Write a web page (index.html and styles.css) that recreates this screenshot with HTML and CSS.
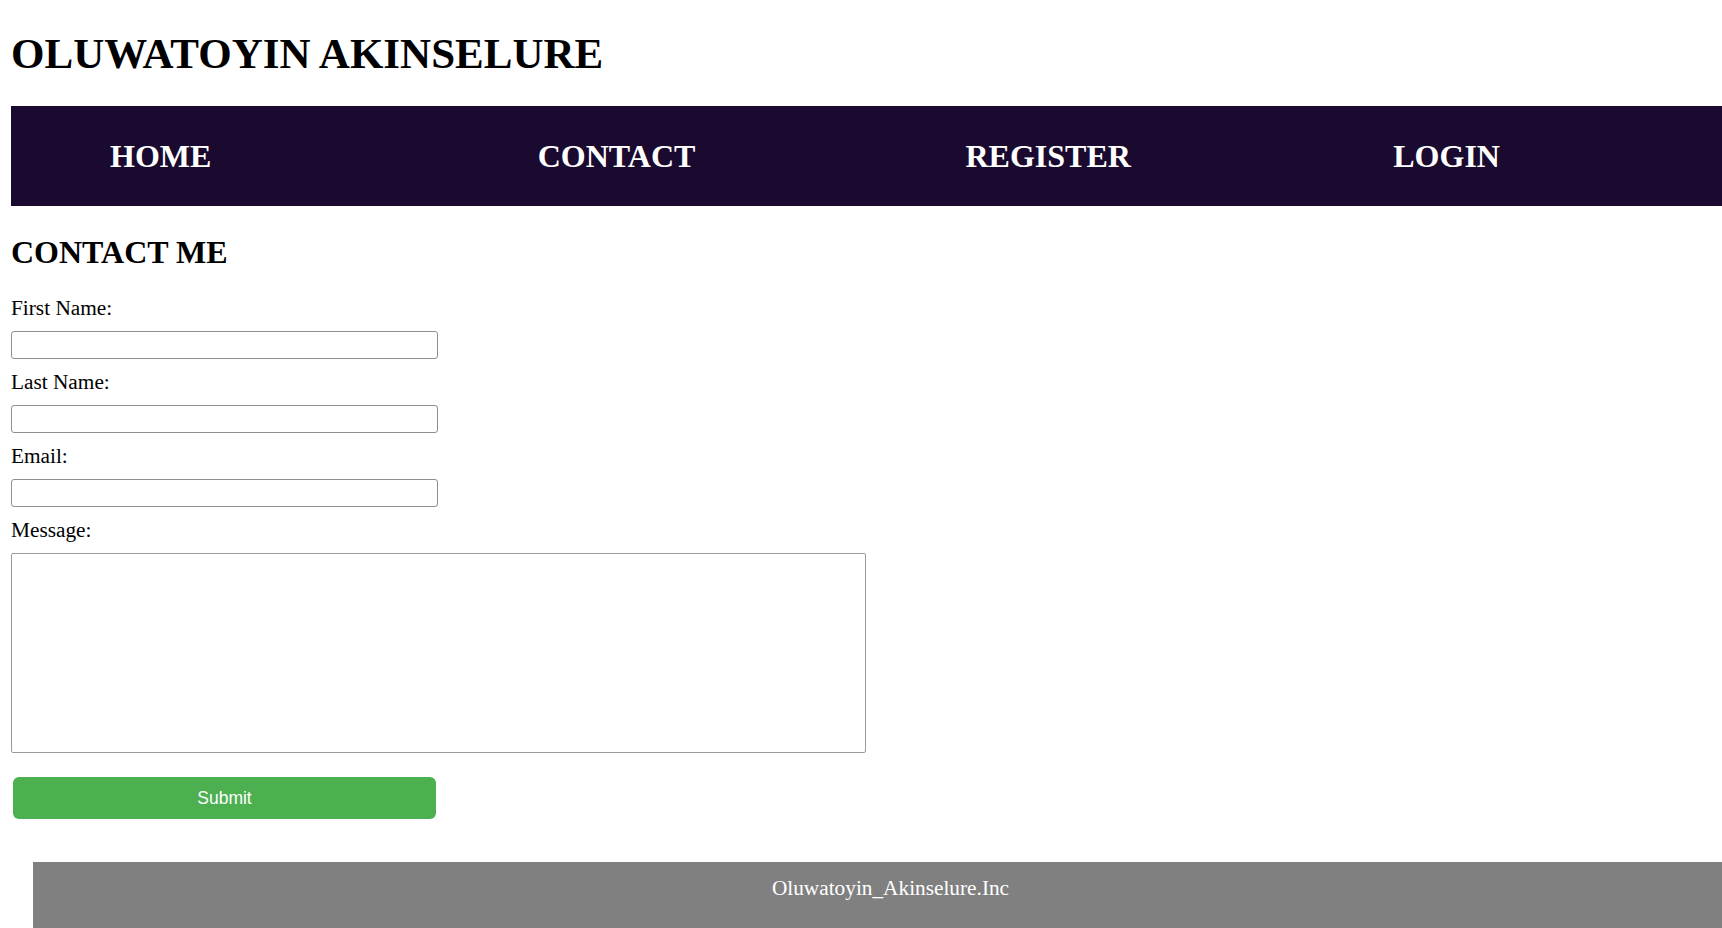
FILE: index.html
```html
<!DOCTYPE html>
<html lang="en">
<head>
<meta charset="utf-8">
<title>Contact - Oluwatoyin Akinselure</title>
<link rel="stylesheet" href="styles.css">
</head>
<body>
<div class="page">
  <h1 class="site-title">OLUWATOYIN AKINSELURE</h1>
  <nav class="main-nav">
    <a class="nav-link" href="#">HOME</a>
    <a class="nav-link" href="#">CONTACT</a>
    <a class="nav-link" href="#">REGISTER</a>
    <a class="nav-link" href="#">LOGIN</a>
  </nav>
  <h2 class="section-title">CONTACT ME</h2>
  <form class="contact-form">
    <label class="field-label" for="fname">First Name:</label>
    <input class="text-input" type="text" id="fname">
    <label class="field-label" for="lname">Last Name:</label>
    <input class="text-input" type="text" id="lname">
    <label class="field-label" for="email">Email:</label>
    <input class="text-input" type="email" id="email">
    <label class="field-label" for="msg">Message:</label>
    <textarea class="message-input" id="msg"></textarea>
    <button class="submit-btn" type="button">Submit</button>
  </form>
  <footer class="site-footer">Oluwatoyin_Akinselure.Inc</footer>
</div>
</body>
</html>
```

FILE: styles.css
```css
html, body {
  margin: 0;
  padding: 0;
  background: #ffffff;
  overflow: hidden;
}

body {
  font-family: "Liberation Serif", "Times New Roman", serif;
  color: #000;
}

.page {
  padding-left: 11px;
}

.site-title {
  margin: 30px 0 0;
  font-size: 43px;
  line-height: 48px;
  font-weight: bold;
}

.main-nav {
  margin-top: 28px;
  height: 100px;
  background: #1b0a2f;
  display: grid;
  grid-template-columns: repeat(4, 1fr);
  align-items: center;
}

.nav-link {
  padding-left: 99px;
  color: #ffffff;
  text-decoration: none;
  font-weight: bold;
  font-size: 32px;
  line-height: 36px;
}

.section-title {
  margin: 28px 0 0;
  font-size: 32px;
  line-height: 36px;
  font-weight: bold;
}

.contact-form {
  margin-top: 26px;
  display: flex;
  flex-direction: column;
  align-items: flex-start;
}

.field-label {
  font-size: 21.3px;
  line-height: 24px;
}

.text-input {
  box-sizing: border-box;
  margin: 11px 0 11px;
  width: 427px;
  height: 28px;
  border: 1px solid #8f8f8f;
  border-radius: 3px;
  padding: 2px 4px;
  background: #fff;
  font-size: 18px;
}

.message-input {
  box-sizing: border-box;
  margin: 11px 0 0;
  width: 855px;
  height: 200px;
  border: 1px solid #9a9a9a;
  border-radius: 2px;
  padding: 3px;
  resize: none;
  background: #fff;
}

.submit-btn {
  margin: 24px 0 0 2px;
  width: 423px;
  height: 42px;
  border: none;
  border-radius: 6px;
  background: #4caf50;
  color: #ffffff;
  font-family: "Liberation Sans", Arial, sans-serif;
  font-size: 17.5px;
  cursor: pointer;
}

.site-footer {
  margin: 43px 0 0 22px;
  padding: 14px 0 30px 26px;
  background: #808080;
  color: #ffffff;
  text-align: center;
  font-size: 21.3px;
  line-height: 24px;
}
```
